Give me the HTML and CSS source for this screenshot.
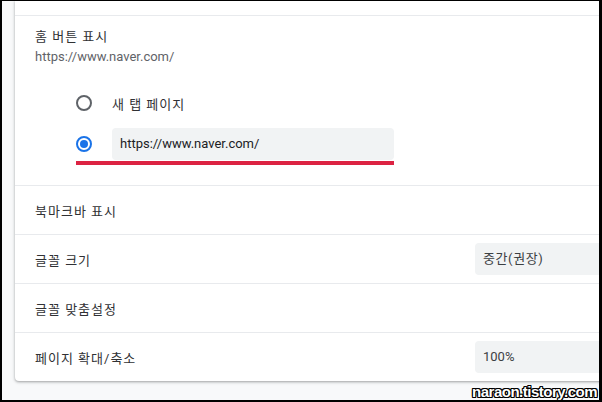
FILE: index.html
```html
<!DOCTYPE html>
<html lang="ko">
<head>
<meta charset="utf-8">
<link rel="stylesheet" href="styles.css">
</head>
<body>
<div class="frame">
  <div class="card">
    <div class="top-space"></div>
    <section class="home">
      <div class="title ko">홈 버튼 표시</div>
      <div class="sub">https://www.naver.com/</div>
      <div class="radios">
        <div class="radio-row">
          <span class="radio"></span>
          <span class="radio-label ko">새 탭 페이지</span>
        </div>
        <div class="radio-row">
          <span class="radio checked"></span>
          <div class="input">https://www.naver.com/</div>
          <span class="mark"></span>
        </div>
      </div>
    </section>
    <div class="row"><span class="label ko">북마크바 표시</span></div>
    <div class="row"><span class="label ko">글꼴 크기</span><div class="select ko-s">중간(권장)</div></div>
    <div class="row"><span class="label ko">글꼴 맞춤설정</span></div>
    <div class="row"><span class="label ko">페이지 확대/축소</span><div class="select">100%</div></div>
  </div>
  <div class="watermark">naraon.tistory.com</div>
</div>
</body>
</html>
```
FILE: styles.css
```css
* { box-sizing: border-box; }
html, body { margin: 0; padding: 0; }
body {
  width: 602px;
  height: 402px;
  font-family: Roboto, "Noto Sans CJK KR", sans-serif;
  font-size: 13px;
  color: #202124;
}
.frame {
  position: relative;
  width: 602px;
  height: 402px;
  background: #f8f9fa;
  border-top: 1px solid #000;
  border-left: 2px solid #000;
  border-right: 3px solid #000;
  border-bottom: 2px solid #000;
  overflow: hidden;
  padding-left: 13px;
}
.card {
  width: 680px;
  background: #fff;
  border-radius: 0 0 4px 4px;
  box-shadow: 0 1px 2px rgba(60,64,67,0.3), 0 1px 3px 1px rgba(60,64,67,0.15);
}
.top-space { height: 14px; }
.home {
  border-top: 1px solid #e8eaed;
  padding: 11px 20px 21px;
}
.ko { letter-spacing: 1px; }
.ko-s { letter-spacing: 0.6px; }
.title, .sub { line-height: 20px; }
.title { color: #303134; }
.sub { color: #5f6368; }
.radios {
  margin-top: 16px;
  padding-left: 41px;
  display: flex;
  flex-direction: column;
  gap: 1px;
}
.radio-row {
  position: relative;
  height: 40px;
  display: flex;
  align-items: center;
  gap: 20px;
}
.radio {
  width: 16px;
  height: 16px;
  border: 2px solid #5f6368;
  border-radius: 50%;
  flex: none;
  position: relative;
}
.radio.checked { border-color: #1a73e8; }
.radio.checked::after {
  content: "";
  position: absolute;
  left: 2px;
  top: 2px;
  width: 8px;
  height: 8px;
  border-radius: 50%;
  background: #1a73e8;
}
.radio-label { color: #303134; }
.input {
  width: 282px;
  height: 32px;
  line-height: 32px;
  padding-left: 8px;
  background: #f1f3f4;
  border-radius: 4px;
}
.mark {
  position: absolute;
  left: 0;
  top: 37px;
  width: 318px;
  height: 4px;
  background: #dc2342;
}
.row {
  border-top: 1px solid #e8eaed;
  height: 49px;
  padding: 0 20px;
  display: flex;
  align-items: center;
}
.label { flex: 1; color: #303134; }
.select {
  width: 200px;
  height: 32px;
  line-height: 32px;
  padding-left: 8px;
  background: #f1f3f4;
  border-radius: 4px;
  color: #3c4043;
}
.watermark {
  position: absolute;
  right: 2px;
  bottom: 0;
  font-family: "Liberation Sans", Arial, sans-serif;
  font-weight: bold;
  font-size: 15px;
  letter-spacing: -0.5px;
  color: #fff;
  text-shadow: -1px -1px 0 #000, 1px -1px 0 #000, -1px 1px 0 #000, 1px 1px 0 #000, 0 1px 0 #000, 0 -1px 0 #000, 1px 0 0 #000, -1px 0 0 #000;
}
```
